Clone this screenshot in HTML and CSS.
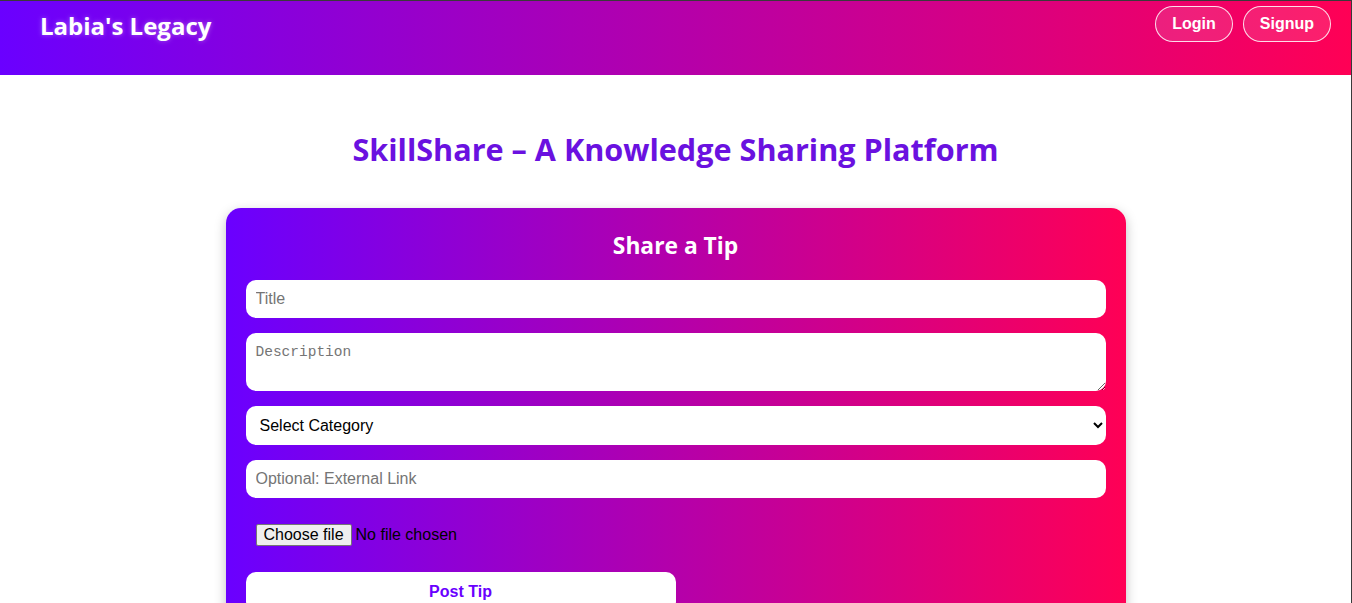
FILE: index.html
```html
<!DOCTYPE html>
<html lang="en">
<head>
<meta charset="UTF-8">
<title>Labia's Legacy - SkillShare</title>
<link rel="stylesheet" href="styles.css">
</head>
<body>
<header class="topbar">
  <div class="logo">Labia's Legacy</div>
  <nav class="nav">
    <button class="nav-btn">Login</button>
    <button class="nav-btn">Signup</button>
  </nav>
</header>
<main class="main">
  <h1 class="page-title">SkillShare – A Knowledge Sharing Platform</h1>
  <form class="card">
    <h2 class="card-title">Share a Tip</h2>
    <input class="field" type="text" placeholder="Title">
    <textarea class="field area" placeholder="Description"></textarea>
    <select class="field select">
      <option>Select Category</option>
    </select>
    <input class="field" type="text" placeholder="Optional: External Link">
    <label class="file">
      <input class="file-input" type="file">
      <span class="file-btn">Choose file</span>
      <span class="file-name">No file chosen</span>
    </label>
    <button class="post" type="button">Post Tip</button>
  </form>
</main>
</body>
</html>
```

FILE: styles.css
```css
html {
  border-top: 1px solid #3a3a3a;
  border-right: 1px solid #3a3a3a;
}
body {
  margin: 0;
  font-family: "Liberation Sans", Arial, sans-serif;
  background: #fff;
}
.topbar {
  height: 74px;
  box-sizing: border-box;
  display: flex;
  justify-content: space-between;
  align-items: flex-start;
  padding: 5px 20px 0 40px;
  background: linear-gradient(90deg, #6a00ff, #ff0055);
}
.logo {
  font-family: "Open Sans", "Noto Sans", sans-serif;
  font-weight: 700;
  font-size: 24px;
  color: #fff;
  margin-top: 3px;
  text-shadow: 0 0 5px rgba(255,255,255,0.35);
}
.nav {
  display: flex;
  gap: 10px;
}
.nav-btn {
  height: 36px;
  padding: 0 16px;
  border: 1px solid rgba(255,255,255,0.85);
  border-radius: 20px;
  background: rgba(255,255,255,0.12);
  color: #fff;
  font-family: "Liberation Sans", Arial, sans-serif;
  font-weight: 700;
  font-size: 16px;
}
.main {
  display: flex;
  flex-direction: column;
  align-items: center;
}
.page-title {
  margin: 54px 0 39px;
  font-family: "Open Sans", "Noto Sans", sans-serif;
  font-weight: 700;
  font-size: 30.6px;
  line-height: 40px;
  color: #6a11e0;
}
.card {
  width: 900px;
  box-sizing: border-box;
  padding: 20px;
  border-radius: 15px;
  background: linear-gradient(90deg, #6a00ff, #ff0055);
  box-shadow: 0 4px 12px rgba(0,0,0,0.25);
  display: flex;
  flex-direction: column;
  align-items: flex-start;
  gap: 15px;
}
.card-title {
  align-self: stretch;
  text-align: center;
  margin: 3px 0 4px;
  font-family: "Open Sans", "Noto Sans", sans-serif;
  font-weight: 700;
  font-size: 22.8px;
  line-height: 30px;
  color: #fff;
}
.field {
  width: 100%;
  box-sizing: border-box;
  border: none;
  border-radius: 10px;
  padding: 10px;
  font-family: "Liberation Sans", Arial, sans-serif;
  font-size: 16px;
  background: #fff;
  color: #000;
  outline: none;
}
.field::placeholder {
  color: #757575;
}
.area {
  height: 58px;
  padding-top: 11px;
  font-family: "Liberation Mono", monospace;
  font-size: 14.5px;
}
.select {
  height: 39px;
  padding: 0 10px;
}
.file {
  display: flex;
  align-items: center;
  gap: 4px;
  padding: 11px 10px;
  font-family: "Liberation Sans", Arial, sans-serif;
  font-size: 16px;
  color: #000;
}
.file-input {
  display: none;
}
.file-btn {
  height: 22px;
  box-sizing: border-box;
  padding: 1px 7px;
  line-height: 18px;
  background: #efefef;
  border: 1px solid #767676;
  border-radius: 2px;
  color: #000;
}
.post {
  width: 50%;
  height: 40px;
  border: none;
  border-radius: 10px;
  background: #fff;
  color: #6a00ff;
  font-family: "Liberation Sans", Arial, sans-serif;
  font-weight: 700;
  font-size: 16px;
}
```
